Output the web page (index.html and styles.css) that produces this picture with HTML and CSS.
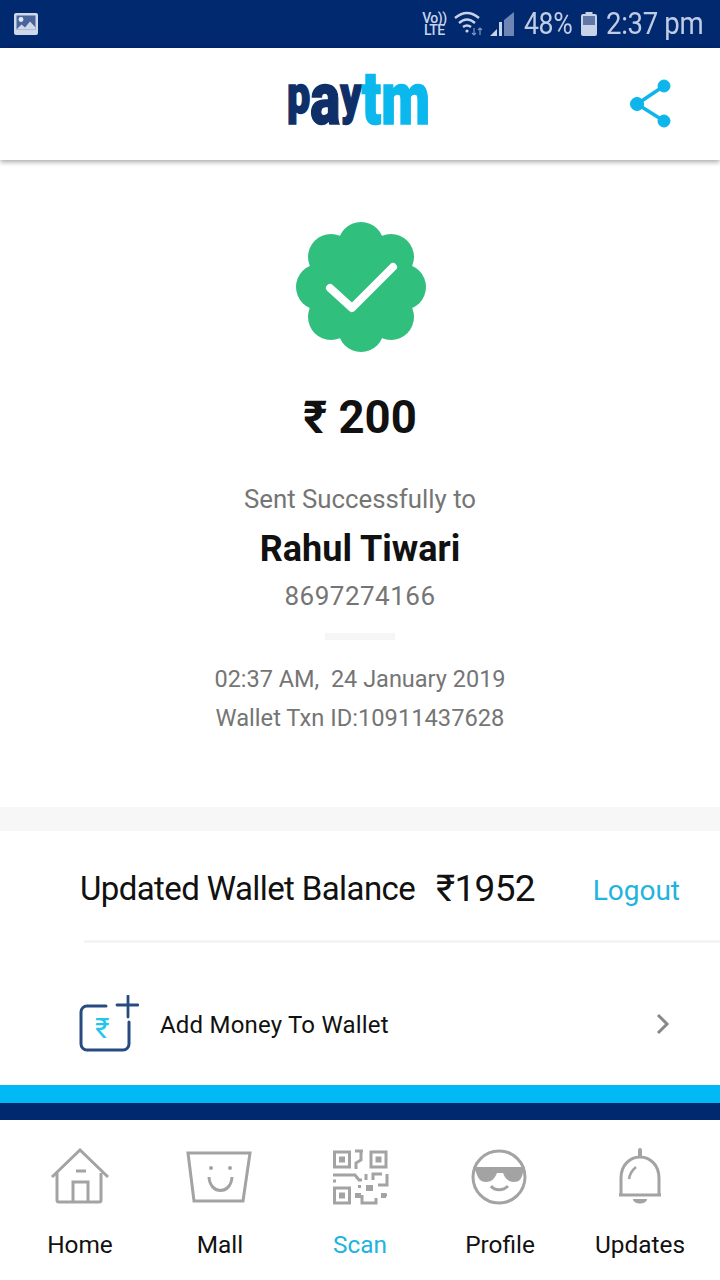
FILE: index.html
```html
<!DOCTYPE html>
<html lang="en">
<head>
<meta charset="utf-8">
<title>Paytm</title>
<link rel="stylesheet" href="styles.css">
</head>
<body>
<div class="screen">
  <div class="status">
    <svg class="s-img" width="24" height="22" viewBox="0 0 24 22"><rect width="24" height="22" rx="2" fill="#cfd8ea"/><rect x="2.500" y="2.500" width="19" height="14" fill="#4a659c"/><circle cx="7" cy="6.500" r="2.400" fill="#e6ebf5"/><path d="M2.500 16.500l5-5 3.500 3 5-6 5.500 6v2z" fill="#cfd8ea"/></svg>
    <div class="s-right">
      <div class="s-volte"><span>Vo))</span><span>LTE</span></div>
      <svg class="s-wifi" width="30" height="26" viewBox="0 0 30 26" fill="none" stroke="#c9d3e8" stroke-width="2.400"><path d="M1 7q12-10 24 0"/><path d="M5 12q8-7 16 0"/><path d="M9 16q4-3 8 0"/><circle cx="13" cy="20" r="1.600" fill="#c9d3e8" stroke="none"/><path d="M20 17v7m-2-2l2 2 2-2M26 24v-7m-2 2l2-2 2 2" stroke="#7f95bf" stroke-width="1.200"/></svg>
      <svg class="s-signal" width="25" height="24" viewBox="0 0 25 24"><path d="M0 24l7-7v7z" fill="#c9d3e8"/><rect x="9" y="10" width="3" height="14" fill="#c9d3e8"/><path d="M14 24V8l10-8v24z" fill="#6f86b4"/></svg>
      <span class="s-text s-pct">48%</span>
      <svg class="s-batt" width="16" height="24" viewBox="0 0 16 24"><rect x="4.500" y="0" width="7" height="3" fill="#c9d3e8"/><rect y="2" width="16" height="22" rx="2" fill="#c9d3e8"/><rect x="2" y="4" width="12" height="9" fill="#5f78a8"/></svg>
      <span class="s-text s-time">2:37 pm</span>
    </div>
  </div>

  <header class="topbar">
    <svg class="logo" width="150" height="100" viewBox="0 0 150 100" role="img" aria-label="paytm">
      <text class="logo-text" x="2" y="59" font-size="54" textLength="143" lengthAdjust="spacingAndGlyphs"><tspan class="logo-pay">p</tspan><tspan class="logo-pay" font-size="74" dy="11">a</tspan><tspan class="logo-pay" dy="-11">y</tspan><tspan class="logo-tm" font-size="74" dy="11">tm</tspan></text>
    </svg>
    <svg class="share" width="44" height="52" viewBox="0 0 44 52" fill="#0db5ea" stroke="#0db5ea"><path d="M35 7L8 25l27 17" fill="none" stroke-width="3.500"/><circle cx="35" cy="7" r="6"/><circle cx="8" cy="25" r="6.500"/><circle cx="35" cy="42" r="6"/></svg>
  </header>

  <main class="receipt">
    <svg class="badge" width="132" height="132" viewBox="0 0 132 132">
      <g fill="#30bf7c">
        <circle cx="66" cy="66" r="46"/>
        <circle cx="66" cy="24" r="23"/><circle cx="96" cy="36" r="23"/><circle cx="108" cy="66" r="23"/><circle cx="96" cy="96" r="23"/>
        <circle cx="66" cy="108" r="23"/><circle cx="36" cy="96" r="23"/><circle cx="24" cy="66" r="23"/><circle cx="36" cy="36" r="23"/>
      </g>
      <path d="M35 67l22 20 41-41" fill="none" stroke="#fff" stroke-width="8" stroke-linecap="round" stroke-linejoin="round"/>
    </svg>
    <div class="amount">₹ 200</div>
    <div class="sent">Sent Successfully to</div>
    <div class="name">Rahul Tiwari</div>
    <div class="phone">8697274166</div>
    <div class="rule"></div>
    <div class="meta meta-date">02:37 AM,&nbsp; 24 January 2019</div>
    <div class="meta meta-txn">Wallet Txn ID:10911437628</div>
  </main>

  <div class="band"></div>

  <section class="balance">
    <span class="balance-label">Updated Wallet Balance</span>
    <span class="balance-value">₹1952</span>
    <span class="logout">Logout</span>
  </section>
  <div class="divider"></div>

  <section class="add">
    <svg class="add-icon" width="60" height="62" viewBox="0 0 60 62" fill="none" stroke="#274a80" stroke-width="3" stroke-linecap="round"><path d="M27 11H8a6 6 0 0 0-6 6v32a6 6 0 0 0 6 6h36a6 6 0 0 0 6-6V27"/><path d="M49 1v21M38 10h21" stroke-width="2.800"/><text class="add-rupee" x="16" y="43" font-size="28" font-family="Roboto, sans-serif" stroke="none">₹</text></svg>
    <span class="add-label">Add Money To Wallet</span>
    <svg class="chev" width="14" height="22" viewBox="0 0 14 22" fill="none" stroke="#888" stroke-width="3"><path d="M2 2l9 9-9 9"/></svg>
  </section>

  <div class="strip-light"></div>
  <div class="strip-dark"></div>

  <nav class="tabs">
    <div class="tab">
      <svg class="tab-icon" width="70" height="60" viewBox="0 0 70 60"><path d="M7 29L35 2l28 27"/><path d="M12 25v27a2 2 0 0 0 2 2h40a2 2 0 0 0 2-2V25"/><path d="M28 54V34h15v20M31 23h10"/></svg>
      <span class="tab-label">Home</span>
    </div>
    <div class="tab">
      <svg class="tab-icon" width="70" height="60" viewBox="0 0 70 60"><path d="M3 5h62l-7 48H9z"/><path d="M24 29c1 18 22 18 23 0"/><circle class="dot" cx="26" cy="20" r="2"/><circle class="dot" cx="45" cy="20" r="2"/></svg>
      <span class="tab-label">Mall</span>
    </div>
    <div class="tab">
      <svg class="tab-icon" width="70" height="60" viewBox="0 0 70 60"><rect x="9.500" y="4" width="15" height="15"/><rect class="dot" x="14" y="8.500" width="6" height="6"/><rect x="46" y="4" width="15" height="15"/><rect class="dot" x="50.500" y="8.500" width="6" height="6"/><rect x="9.500" y="40" width="15" height="15"/><rect class="dot" x="14" y="44.500" width="6" height="6"/><path d="M30 3h8M36 3v9l-5 3v6M8 27h22l4 5h3M8 33h3M57 26h-9v6M62 26v11h-9M41 26v6M37 47v8h14v-5M62 47h-5"/><rect class="dot" x="41" y="37" width="7" height="6"/><rect class="dot" x="30" y="45" width="6" height="5"/><rect class="dot" x="56" y="45" width="5" height="5"/><rect class="dot" x="33" y="37" width="3" height="3"/></svg>
      <span class="tab-label tab-active">Scan</span>
    </div>
    <div class="tab">
      <svg class="tab-icon" width="70" height="60" viewBox="0 0 70 60"><circle cx="34" cy="29" r="26"/><path class="dot" d="M8 19h52l-2 5c-1 7-4 10-9 10-6 0-9-4-11-9h-6c-2 5-5 9-11 9-5 0-8-3-10-10z"/><path d="M26 38c4 5 12 5 17 0"/></svg>
      <span class="tab-label">Profile</span>
    </div>
    <div class="tab">
      <svg class="tab-icon" width="70" height="60" viewBox="0 0 70 60"><path d="M35 2v5" stroke-width="4" stroke-linecap="round"/><path d="M16 47V30c0-13 9-21 19-21s19 8 19 21v17M14 47h42"/><path d="M24 31q1-7 7-12" stroke-width="2.500"/><path class="dot" d="M28 51h14c0 6-14 6-14 0z"/></svg>
      <span class="tab-label">Updates</span>
    </div>
  </nav>
</div>
</body>
</html>
```
FILE: styles.css
```css
* { box-sizing: border-box; }
html, body { margin: 0; padding: 0; background: #fff; }
body { font-family: Roboto, "Liberation Sans", sans-serif; }
.screen { width: 720px; height: 1280px; overflow: hidden; display: flex; flex-direction: column; }

.status { height: 48px; flex: none; background: #002970; display: flex; align-items: center; justify-content: space-between; padding: 0 17px 0 14px; color: #c0cce4; }
.s-right { display: flex; align-items: center; }
.s-volte { display: flex; flex-direction: column; font-size: 14px; line-height: 12px; font-weight: 500; color: #c9d3e8; width: 26px; align-items: center; letter-spacing: -.5px; }
.s-wifi { margin-left: 7px; }
.s-signal { margin-left: 6px; }
.s-text { display: inline-block; font-size: 31px; line-height: 34px; letter-spacing: -0.4px; transform: scaleX(.86); transform-origin: right center; }
.s-pct { margin-left: 1px; }
.s-batt { margin-left: 8px; }
.s-time { margin-left: -3px; transform: scaleX(.89); }

.topbar { height: 112px; flex: none; background: #fff; position: relative; z-index: 1; box-shadow: 0 2px 5px rgba(0,0,0,.35); display: flex; align-items: center; justify-content: center; }
.logo-text { font-family: Roboto, sans-serif; font-weight: 900; stroke-width: 1.5; }
.logo-pay { fill: #0f2f68; stroke: #0f2f68; }
.logo-tm { fill: #0bb8ee; stroke: #0bb8ee; }
.share { position: absolute; right: 47px; top: 31px; }

.receipt { height: 647px; flex: none; display: flex; flex-direction: column; align-items: center; padding-top: 61px; }
.badge { flex: none; margin-left: 2px; filter: blur(.4px); }
.amount { margin-top: 40px; font-size: 45.5px; line-height: 50px; font-weight: 700; color: #111; }
.sent { margin-top: 41px; font-size: 25.8px; line-height: 30px; color: #757575; }
.name { margin-top: 13px; font-size: 36px; line-height: 44px; font-weight: 700; color: #111; }
.phone { margin-top: 10px; font-size: 26px; line-height: 30px; color: #757575; letter-spacing: .5px; }
.rule { margin-top: 22px; width: 70px; height: 7px; background: #f6f6f6; flex: none; }
.meta { font-size: 23.7px; line-height: 30px; color: #757575; }
.meta-date { margin-top: 24px; font-size: 23.5px; }
.meta-txn { margin-top: 9px; }

.band { height: 24px; flex: none; background: #f7f7f7; }
.balance { height: 109px; flex: none; display: flex; align-items: center; padding: 6px 40px 0 80px; }
.balance-label { font-size: 33px; letter-spacing: -.6px; color: #111; }
.balance-value { margin-left: 21px; font-size: 37px; letter-spacing: -.7px; color: #111; }
.logout { margin-left: auto; margin-top: 3px; font-size: 28px; color: #22b3de; }
.divider { height: 3px; flex: none; margin-left: 84px; background: #f4f4f4; }
.add { height: 142px; flex: none; display: flex; align-items: center; padding: 22px 50px 0 79px; }
.add-icon { flex: none; margin-top: 2px; }
.add-rupee { fill: #22c6ea; }
.add-label { margin-left: 21px; font-size: 24px; color: #111; letter-spacing: .2px; }
.chev { margin-left: auto; margin-bottom: 2px; }
.strip-light { height: 18px; flex: none; background: #00b9f5; }
.strip-dark { height: 17px; flex: none; background: #002970; }

.tabs { flex: 1; background: #fff; display: flex; padding: 28px 10px 0; }
.tab { width: 140px; display: flex; flex-direction: column; align-items: center; }
.tab-icon { fill: none; stroke: #a3a3a3; stroke-width: 3; filter: blur(.4px); flex: none; }
.tab-icon .dot { fill: #a3a3a3; stroke: none; }
.tab-label { margin-top: 22px; font-size: 24.4px; line-height: 30px; color: #111; }
.tab-active { color: #22b3de; }
```
